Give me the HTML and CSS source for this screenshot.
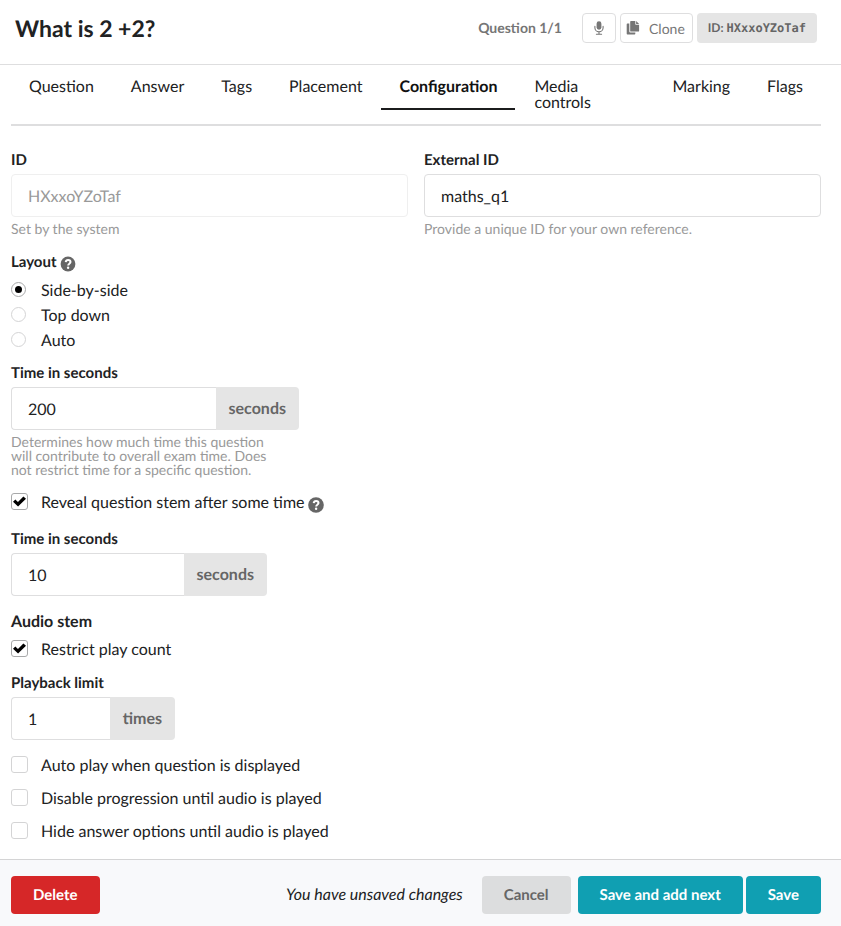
FILE: index.html
```html
<!DOCTYPE html>
<html lang="en">
  <head>
    <meta charset="UTF-8">
    <meta name="viewport" content="width=device-width, initial-scale=1">
    <title>What is 2 +2?</title>
    <link rel="stylesheet" href="styles.css">
  </head>
  <body>
    <header class="header">
      <h1 class="title">What is 2 +2?</h1>
      <span class="counter">Question 1/1</span>
      <div class="actions">
        <button type="button" class="small-button" aria-label="Record audio">
          <svg class="icon" viewBox="0 0 14 14" width="14" height="14">
            <rect x="4.6" y="0.3" width="4.8" height="8.4" rx="2.4"/>
            <path d="M2.9 5.4v1.4a4.1 4.1 0 0 0 8.2 0V5.4M7 10.9v2.2M4.4 13.2h5.2" fill="none" stroke="currentColor" stroke-width="1.1" stroke-linecap="round"/>
          </svg>
        </button>
        <button type="button" class="small-button clone">
          <svg class="icon" viewBox="0 0 14 14" width="14" height="14">
            <path d="M4.9 0h4.4v3.2c0 .3.2.5.5.5h3.3v6.2c0 .4-.3.7-.7.7H4.9c-.4 0-.7-.3-.7-.7V.7c0-.4.3-.7.7-.7z"/>
            <path d="M10.1 0l3 2.9h-3z"/>
            <path d="M3.3 2.6v8c0 .5.4.9.9.9h5.1v1.3c0 .4-.3.7-.7.7H1.4c-.4 0-.7-.3-.7-.7V3.3c0-.4.3-.7.7-.7z"/>
          </svg>
          Clone
        </button>
        <span class="id-label">ID: <code>HXxxoYZoTaf</code></span>
      </div>
    </header>

    <nav class="tabs">
      <a class="tab" href="#question">Question</a>
      <a class="tab" href="#answer">Answer</a>
      <a class="tab" href="#tags">Tags</a>
      <a class="tab" href="#placement">Placement</a>
      <a class="tab active" href="#configuration">Configuration</a>
      <a class="tab media" href="#media">Media<br>controls</a>
      <a class="tab" href="#marking">Marking</a>
      <a class="tab" href="#flags">Flags</a>
    </nav>

    <form id="question-form" class="form">
      <div class="two-fields">
        <div class="field">
          <label for="system-id">ID</label>
          <input class="text-input" type="text" id="system-id" value="HXxxoYZoTaf" disabled>
          <p class="help">Set by the system</p>
        </div>
        <div class="field">
          <label for="external-id">External ID</label>
          <input class="text-input" type="text" id="external-id" name="external-id" value="maths_q1">
          <p class="help">Provide a unique ID for your own reference.</p>
        </div>
      </div>

      <fieldset class="field">
        <legend>Layout
          <svg class="help-icon" viewBox="0 0 16 16" width="16" height="16">
            <circle cx="8" cy="8" r="7.4"/>
            <path d="M5.7 6.2C5.9 4.8 6.8 4.1 8.1 4.1c1.4 0 2.4.8 2.4 2 0 1.7-2.3 1.6-2.3 3.3" fill="none" stroke="#fff" stroke-width="2"/>
            <circle cx="8.1" cy="11.7" r="1.2" fill="#fff"/>
          </svg>
        </legend>
        <div class="choice"><input type="radio" id="side" name="layout" checked><label for="side">Side-by-side</label></div>
        <div class="choice"><input type="radio" id="top" name="layout"><label for="top">Top down</label></div>
        <div class="choice"><input type="radio" id="auto" name="layout"><label for="auto">Auto</label></div>
      </fieldset>

      <div class="field timing">
        <label for="exam-time">Time in seconds</label>
        <div class="labeled-input wide">
          <input class="text-input" type="text" inputmode="numeric" id="exam-time" value="200">
          <span class="unit">seconds</span>
        </div>
        <p class="help narrow">Determines how much time this question will contribute to overall exam time. Does not restrict time for a specific question.</p>
      </div>

      <div class="choice spaced">
        <input type="checkbox" id="reveal" checked>
        <label for="reveal">Reveal question stem after some time</label>
        <svg class="help-icon" viewBox="0 0 16 16" width="16" height="16">
          <circle cx="8" cy="8" r="7.8"/>
          <path d="M5.7 6.2C5.9 4.8 6.8 4.1 8.1 4.1c1.4 0 2.4.8 2.4 2 0 1.7-2.3 1.6-2.3 3.3" fill="none" stroke="#fff" stroke-width="2"/>
          <circle cx="8.1" cy="11.7" r="1.2" fill="#fff"/>
        </svg>
      </div>

      <div class="field">
        <label for="reveal-time">Time in seconds</label>
        <div class="labeled-input medium">
          <input class="text-input" type="text" inputmode="numeric" id="reveal-time" value="10">
          <span class="unit">seconds</span>
        </div>
      </div>

      <h2 class="section-title">Audio stem</h2>
      <div class="choice spaced"><input type="checkbox" id="restrict" checked><label for="restrict">Restrict play count</label></div>

      <div class="field">
        <label for="limit">Playback limit</label>
        <div class="labeled-input short">
          <input class="text-input" type="text" inputmode="numeric" id="limit" value="1">
          <span class="unit">times</span>
        </div>
      </div>

      <div class="choice-list">
        <div class="choice"><input type="checkbox" id="autoplay"><label for="autoplay">Auto play when question is displayed</label></div>
        <div class="choice"><input type="checkbox" id="disable"><label for="disable">Disable progression until audio is played</label></div>
        <div class="choice"><input type="checkbox" id="hide"><label for="hide">Hide answer options until audio is played</label></div>
      </div>
    </form>

    <footer class="footer">
      <button type="button" class="button delete">Delete</button>
      <em class="unsaved">You have unsaved changes</em>
      <button type="button" class="button cancel">Cancel</button>
      <div class="save-buttons">
        <button type="submit" form="question-form" class="button save">Save and add next</button>
        <button type="submit" form="question-form" class="button save">Save</button>
      </div>
    </footer>
  </body>
</html>
```
FILE: styles.css
```css
* {
	box-sizing: border-box;
}

body {
	margin: 0;
	background-color: #fff;
	color: #212223;
	font-family: Lato, "Liberation Sans", sans-serif;
	font-size: 16px;
	line-height: 16px;
	text-rendering: geometricPrecision;
}

button, input {
	font-family: inherit;
	font-size: inherit;
	text-rendering: inherit;
}

/* Header */
.header {
	display: flex;
	align-items: center;
	min-height: 65px;
	padding: 0 24px 8px 15px;
	border-bottom: 1px solid #dededf;
}

.title {
	flex: 1;
	margin: 0;
	font-size: 23px;
	line-height: 28px;
}

.counter {
	margin-right: 20px;
	color: #767676;
	font-size: 14px;
	font-weight: bold;
}

.actions {
	display: flex;
	align-items: center;
	gap: 4px;
}

.small-button {
	display: flex;
	align-items: center;
	gap: 9px;
	height: 30px;
	padding: 0 9px;
	background-color: #fff;
	border: 1px solid #dededf;
	border-radius: 4px;
	color: #767676;
	font-size: 14px;
	cursor: pointer;
}

.clone {
	padding: 0 7px 0 5px;
}

.icon {
	fill: currentColor;
}

.id-label {
	padding: 7px 11px;
	background-color: #e5e5e5;
	border-radius: 4px;
	color: #666;
	font-size: 12px;
	font-weight: bold;
}

.id-label code {
	font-family: "DejaVu Sans Mono", monospace;
	font-size: 12px;
}

/* Tabs */
.tabs {
	display: flex;
	align-items: flex-start;
	gap: 1px;
	margin: 0 20px 24px 11px;
	border-bottom: 2px solid #dededf;
}

.tab {
	margin-bottom: -2px;
	padding: 14px 18px 13px;
	border-bottom: 2px solid transparent;
	color: inherit;
	text-decoration: none;
}

.tab.active {
	border-color: #1b1c1d;
	color: #111;
	font-weight: bold;
}

.tab.media {
	flex: 1;
}

/* Form */
.form {
	padding: 0 20px 15px 11px;
}

.two-fields {
	display: grid;
	grid-template-columns: 1fr 1fr;
	gap: 16px;
	margin-bottom: 16px;
}

.field {
	margin: 0;
	padding: 0;
	border: 0;
}

.field > label,
.field legend {
	display: block;
	margin-bottom: 3px;
	padding: 0;
	font-size: 15px;
	font-weight: bold;
	line-height: 21px;
}

.field legend {
	display: flex;
	align-items: center;
	gap: 3px;
	margin-bottom: 5px;
}

.help-icon {
	fill: #666;
	position: relative;
	top: 1px;
}

.text-input {
	width: 100%;
	height: 43px;
	padding: 2px 16px 0;
	background-color: #fff;
	border: 1px solid #dededf;
	border-radius: 4px;
	color: #212223;
}

.text-input:disabled {
	border-color: #efefef;
	color: #999;
}

.help {
	margin: 5px 0 0;
	color: #999;
	font-size: 14px;
	line-height: 14px;
}

.narrow {
	max-width: 264px;
}

.labeled-input {
	display: flex;
	max-width: 100%;
}

.labeled-input .text-input {
	flex: 1;
	min-width: 0;
	border-right: 0;
	border-radius: 4px 0 0 4px;
}

.wide {
	width: 288px;
}

.medium {
	width: 256px;
}

.short {
	width: 164px;
}

.unit {
	padding: 0 13px;
	background-color: #e5e5e5;
	border-radius: 0 4px 4px 0;
	color: #666;
	font-weight: bold;
	line-height: 43px;
}

.choice {
	display: flex;
	align-items: center;
	min-height: 25px;
}

.choice input {
	flex: none;
	display: grid;
	place-items: center;
	width: 17px;
	height: 17px;
	margin: 0 13px 2px 0;
	appearance: none;
	background-color: #fff;
	border: 1px solid #d4d4d5;
	border-radius: 3px;
}

.choice input[type=radio] {
	width: 15px;
	height: 15px;
	margin-right: 15px;
	border-radius: 50%;
}

.choice input:checked {
	border-color: #a8a9aa;
}

.choice input:checked::before {
	content: "";
	width: 13px;
	height: 11px;
	background-color: #000;
	clip-path: polygon(0 52%, 18% 32%, 38% 55%, 80% 5%, 100% 25%, 39% 95%);
}

.choice input[type=radio]:checked::before {
	width: 7px;
	height: 7px;
	border-radius: 50%;
	clip-path: none;
}

.choice .help-icon {
	top: 2px;
	margin-left: 3px;
}

.timing {
	margin-top: 10px;
}

.spaced {
	margin: 13px 0 14px;
}

.section-title {
	margin: 16px 0 5px;
	font-size: 16px;
	line-height: 20px;
}

.section-title + .spaced {
	margin: 0 0 11px;
}

.choice-list {
	display: grid;
	gap: 8px;
	margin-top: 13px;
}

/* Footer */
.footer {
	display: flex;
	align-items: center;
	padding: 16px 20px 12px 11px;
	background-color: #f8f9fb;
	border-top: 1px solid #d4d4d5;
}

.button {
	height: 38px;
	padding: 0 22px;
	border: none;
	border-radius: 4px;
	color: #fff;
	font-size: 15px;
	font-weight: bold;
	cursor: pointer;
}

.delete {
	background-color: #d62728;
}

.unsaved {
	margin-left: auto;
	margin-right: 19px;
}

.cancel {
	margin-right: 7px;
	background-color: #dcddde;
	color: #666;
}

.save-buttons {
	display: flex;
	gap: 3px;
}

.save {
	background-color: #109fb2;
}
```
